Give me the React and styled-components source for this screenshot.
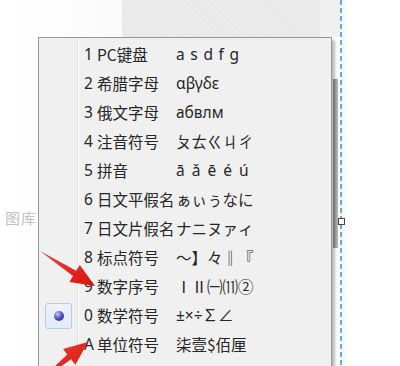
import React from "react";
import styled, { createGlobalStyle } from "styled-components";

const GlobalStyle = createGlobalStyle`
  html, body {
    margin: 0;
    padding: 0;
    background: #ffffff;
  }
  body {
    font-family: "Noto Sans", "Noto Sans CJK SC", sans-serif;
  }
`;

const Page = styled.div`
  position: relative;
  width: 400px;
  height: 366px;
  overflow: hidden;
  background: #ffffff;
`;

const Backdrop = styled.div`
  display: grid;
  grid-template-columns: 122px 198px 20px 1fr;
  height: 100%;
`;

const SideColumn = styled.div`
  padding: 207px 0 0 5px;
  background: linear-gradient(to right, #ffffff, #fbfbfb);
`;

const FadedLabel = styled.span`
  font-family: "Noto Sans CJK SC", sans-serif;
  font-size: 15px;
  color: #c2c2c2;
  letter-spacing: 1px;
`;

const CanvasColumn = styled.div`
  display: flex;
  flex-direction: column;
`;

const TexturedStrip = styled.div`
  height: 37px;
  background-color: #e8e8e8;
  background-image: repeating-linear-gradient(
      45deg,
      rgba(255, 255, 255, 0.25) 0 1px,
      transparent 1px 3px
    );
`;

const GapColumn = styled.div`
  display: flex;
  flex-direction: column;
  background: linear-gradient(#f0f0f0 0 37px, #ffffff 37px);
`;

const ScrollThumb = styled.div`
  margin: 79px 0 0 13px;
  width: 5px;
  height: 169px;
  background: linear-gradient(to right, #8f8f8f, #a9a9a9 60%, #bdbdbd);
`;

const GuideColumn = styled.div`
  background-image: linear-gradient(#6fa6d2 0 5px, transparent 5px 8px),
    linear-gradient(to right, #eef6fc, #ffffff);
  background-size: 2px 8px, 6px 100%;
  background-repeat: repeat-y, repeat-y;
  background-position: 0 0, 2px 0;
`;

const Handle = styled.div`
  position: absolute;
  left: 338px;
  top: 218px;
  width: 5px;
  height: 5px;
  border: 1px solid #444;
  background: #fff;
`;

const Menu = styled.div`
  position: absolute;
  left: 38px;
  top: 37px;
  width: 292px;
  padding-top: 2px;
  border: 1px solid #979797;
  border-bottom: none;
  background: linear-gradient(
    to right,
    #f0f0f0 0 38px,
    #e2e3e3 38px 39px,
    #ffffff 39px 40px,
    #f0f0f0 40px
  );
  box-shadow: 3px 3px 3px rgba(0, 0, 0, 0.28);
  color: #262626;
  font-size: 15.5px;
`;

const Row = styled.div`
  display: grid;
  grid-template-columns: 38px 1fr;
  height: 29px;
  line-height: 29px;
`;

const Gutter = styled.div`
  display: flex;
  align-items: center;
  justify-content: center;
`;

const RadioBox = styled.div`
  display: flex;
  align-items: center;
  justify-content: center;
  width: 25px;
  height: 24px;
  margin-left: 1px;
  border: 1px solid #b8cbe6;
  border-radius: 3px;
  background: linear-gradient(#eef3fb, #e2eaf6);
`;

const Bullet = styled.span`
  width: 10px;
  height: 10px;
  border-radius: 50%;
  background: radial-gradient(circle at 35% 30%, #c9c8ff 0, #5a55c8 45%, #1f1a78 100%);
`;

const Content = styled.div`
  display: flex;
  padding-left: 7px;
  white-space: nowrap;
`;

const Key = styled.span`
  width: 13px;
`;

const Label = styled.span`
  width: 79px;
  font-family: "Noto Sans CJK SC", sans-serif;
`;

const Symbols = styled.span`
  font-family: "Noto Sans", "Noto Sans CJK SC", sans-serif;
  letter-spacing: ${(p) => p.$spacing || 0}px;
`;

const CjkSymbols = styled(Symbols)`
  font-family: "Noto Sans CJK SC", sans-serif;
`;

const Arrows = styled.svg`
  position: absolute;
  left: 0;
  top: 0;
  pointer-events: none;
`;

const items = [
  { key: "1", label: "PC键盘", symbols: "a s d f g", spacing: 0.8 },
  { key: "2", label: "希腊字母", symbols: "αβγδε" },
  { key: "3", label: "俄文字母", symbols: "абвлм" },
  { key: "4", label: "注音符号", symbols: "ㄆㄊㄍㄐㄔ", cjk: true },
  { key: "5", label: "拼音", symbols: "ā ǎ ē é ú", spacing: 1.5 },
  { key: "6", label: "日文平假名", symbols: "ぁぃぅなに", cjk: true },
  { key: "7", label: "日文片假名", symbols: "ナニヌァィ", cjk: true },
  { key: "8", label: "标点符号", symbols: "～】々‖『", cjk: true },
  { key: "9", label: "数字序号", symbols: "ⅠⅡ㈠⑾②", cjk: true },
  { key: "0", label: "数学符号", symbols: "±×÷∑∠", checked: true },
  { key: "A", label: "单位符号", symbols: "柒壹$佰厘", cjk: true },
  { key: "B", label: "制表符", symbols: "┃┃┃", cjk: true },
];

export default function App() {
  return (
    <Page>
      <GlobalStyle />
      <Backdrop>
        <SideColumn>
          <FadedLabel>图库</FadedLabel>
        </SideColumn>
        <CanvasColumn>
          <TexturedStrip />
        </CanvasColumn>
        <GapColumn>
          <ScrollThumb />
        </GapColumn>
        <GuideColumn />
      </Backdrop>
      <Handle />

      <Menu>
        {items.map((item) => (
          <Row key={item.key}>
            <Gutter>
              {item.checked && (
                <RadioBox>
                  <Bullet />
                </RadioBox>
              )}
            </Gutter>
            <Content>
              <Key>{item.key}</Key>
              <Label>{item.label}</Label>
              {item.cjk ? (
                <CjkSymbols>{item.symbols}</CjkSymbols>
              ) : (
                <Symbols $spacing={item.spacing}>{item.symbols}</Symbols>
              )}
            </Content>
          </Row>
        ))}
      </Menu>

      <Arrows width="400" height="366" viewBox="0 0 400 366">
        <defs>
          <linearGradient id="red" x1="0" y1="0" x2="1" y2="1">
            <stop offset="0" stopColor="#f0413a" />
            <stop offset="1" stopColor="#d9120c" />
          </linearGradient>
        </defs>
        <polygon
          points="40,251 76.2,270.8 79.8,264.9 95,286 69.4,281.9 73,276"
          fill="url(#red)"
        />
        <polygon
          points="36,384 67.3,354.5 63,349.1 88,342 75.4,364.7 71.1,359.3"
          fill="url(#red)"
        />
      </Arrows>
    </Page>
  );
}
